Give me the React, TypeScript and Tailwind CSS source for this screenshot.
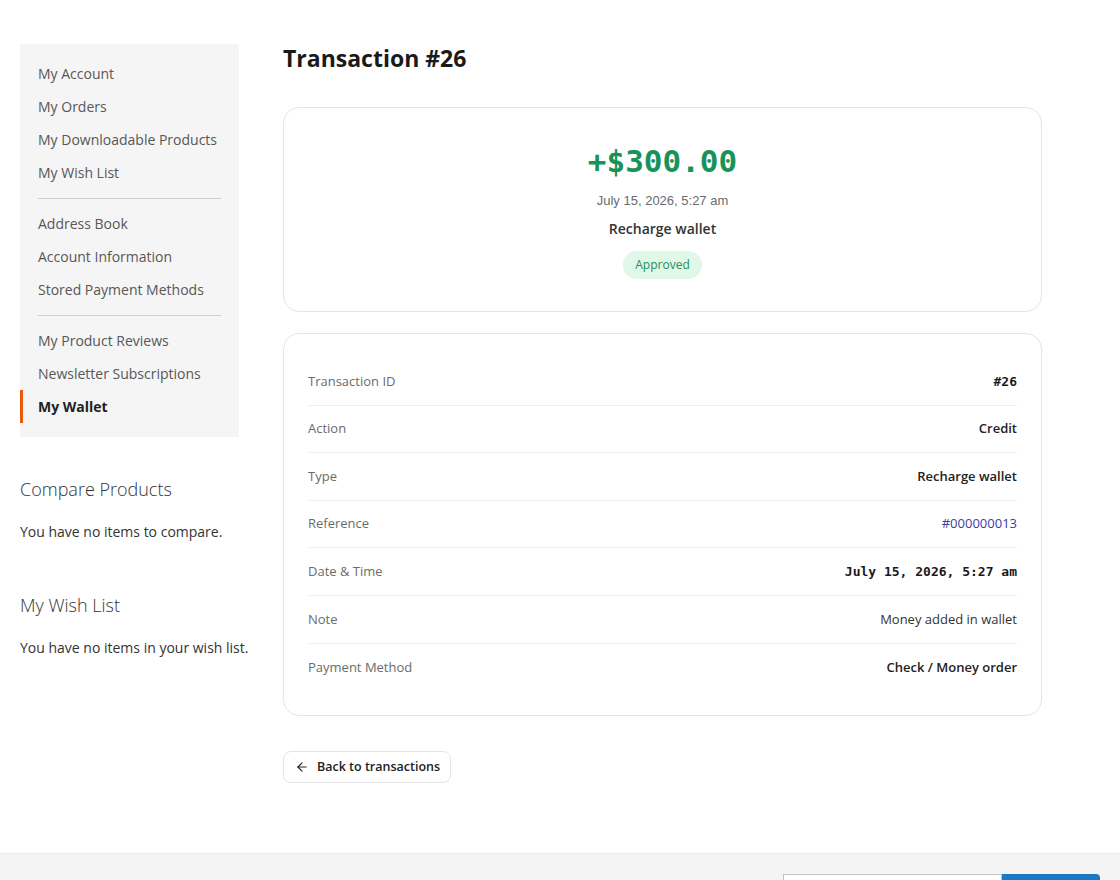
import { ArrowLeft } from 'lucide-react';

const navGroups = [
  ['My Account', 'My Orders', 'My Downloadable Products', 'My Wish List'],
  ['Address Book', 'Account Information', 'Stored Payment Methods'],
  ['My Product Reviews', 'Newsletter Subscriptions', 'My Wallet'],
];

const details = [
  { label: 'Transaction ID', value: '#26', kind: 'mono' },
  { label: 'Action', value: 'Credit', kind: 'bold' },
  { label: 'Type', value: 'Recharge wallet', kind: 'bold' },
  { label: 'Reference', value: '#000000013', kind: 'link' },
  { label: 'Date & Time', value: 'July 15, 2026, 5:27 am', kind: 'mono' },
  { label: 'Note', value: 'Money added in wallet', kind: 'plain' },
  { label: 'Payment Method', value: 'Check / Money order', kind: 'bold' },
];

function valueClass(kind: string) {
  if (kind === 'mono') return "font-['DejaVu_Sans_Mono',monospace] font-bold text-[13px] text-[#1a1a1a]";
  if (kind === 'link') return 'text-[13px] text-[#3b3ba8]';
  if (kind === 'plain') return 'text-[13px] text-[#333]';
  return 'text-[13px] font-semibold text-[#222]';
}

function Sidebar() {
  return (
    <aside className="w-[219px] shrink-0 pt-[44px]">
      <nav className="bg-[#f5f5f5] pt-[13px] pb-[14px]">
        {navGroups.map((group, gi) => (
          <div key={gi}>
            {gi > 0 && <div className="mx-[18px] mt-[9px] mb-2 h-px bg-[#d1d1d1]" />}
            {group.map((item) => {
              const active = item === 'My Wallet';
              return (
                <div
                  key={item}
                  className={
                    active
                      ? 'flex h-[33px] items-center border-l-[3px] border-[#e8590c] pl-[15px] text-[14px] font-bold text-[#222]'
                      : 'flex h-[33px] items-center pl-[18px] text-[14px] text-[#575757]'
                  }
                >
                  {item}
                </div>
              );
            })}
          </div>
        ))}
      </nav>

      <div className="mt-[40px]">
        <h2 className="text-[18px] font-light leading-6 text-[#333]">Compare Products</h2>
        <p className="mt-[21px] text-[14px] leading-5 text-[#333]">You have no items to compare.</p>
      </div>

      <div className="mt-[51px]">
        <h2 className="text-[18px] font-light leading-6 text-[#333]">My Wish List</h2>
        <p className="mt-[21px] whitespace-nowrap text-[14px] leading-5 text-[#333]">
          You have no items in your wish list.
        </p>
      </div>
    </aside>
  );
}

export default function App() {
  return (
    <div className="min-h-[880px] bg-white font-['Open_Sans',sans-serif] text-[#333]">
      <div className="flex gap-[44px] px-5">
        <Sidebar />

        <main className="w-[759px] pt-[43px]">
          <h1 className="text-[23px] font-bold leading-[30px] text-[#1a1a1a]">Transaction #26</h1>

          {/* Summary card */}
          <div className="mt-[34px] flex flex-col items-center rounded-2xl border border-[#e5e5e5] pt-[33px] pb-[32px]">
            <div className="font-['DejaVu_Sans_Mono',monospace] text-[31px] font-bold leading-[40px] text-[#17935a]">
              +$300.00
            </div>
            <div className="mt-[11px] font-['Liberation_Sans',Arial,sans-serif] text-[13px] leading-[18px] text-[#6b6b6b]">
              July 15, 2026, 5:27 am
            </div>
            <div className="mt-[9px] text-[14px] font-semibold leading-5 text-[#333]">Recharge wallet</div>
            <span className="mt-[12px] flex h-[28px] items-center rounded-full bg-[#e0f8e8] px-3 text-[12px] text-[#22915a]">
              Approved
            </span>
          </div>

          {/* Details card */}
          <div className="mt-[21px] rounded-2xl border border-[#e5e5e5] px-6 py-6">
            {details.map((row, i) => (
              <div
                key={row.label}
                className={
                  i < details.length - 1
                    ? 'flex h-[47.6px] items-center justify-between border-b border-[#f0f0f0]'
                    : 'flex h-[47.6px] items-center justify-between'
                }
              >
                <span className="text-[13px] text-[#6b6b6b]">{row.label}</span>
                <span className={valueClass(row.kind)}>{row.value}</span>
              </div>
            ))}
          </div>

          <button className="mt-[35px] flex h-[32px] items-center gap-2 rounded-lg border border-[#e5e5e5] bg-white pl-[11px] pr-[10px] text-[12.5px] font-semibold text-[#222]">
            <ArrowLeft size={14} strokeWidth={2} />
            Back to transactions
          </button>
        </main>
      </div>

      <footer className="mt-[70px] border-t border-[#ececec] bg-[#f4f4f4] px-5 pt-5 pb-8">
        <div className="flex items-start">
          <div className="w-[214px] pt-[16px] text-[14px] text-[#333]">About us</div>
          <div className="w-[549px] pt-[16px] text-[14px] text-[#333]">Privacy and Cookie Policy</div>
          <div className="flex">
            <div className="h-[32px] w-[219px] border border-[#c2c2c2] bg-white" />
            <div className="flex h-[32px] w-[98px] items-center justify-center rounded-r-sm bg-[#1979c3] text-[14px] font-semibold text-white">
              Subscribe
            </div>
          </div>
        </div>
      </footer>
    </div>
  );
}
